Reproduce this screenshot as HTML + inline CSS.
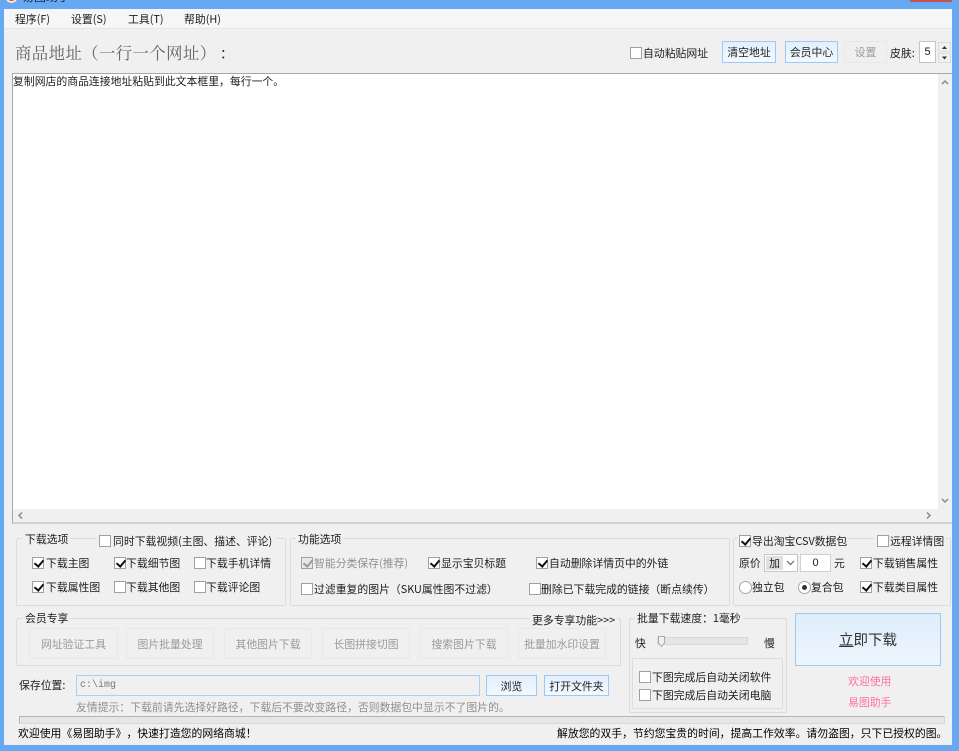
<!DOCTYPE html>
<html><head><meta charset="utf-8">
<style>
html,body{margin:0;padding:0;width:959px;height:751px;overflow:hidden;background:#66a9f2}
*{box-sizing:border-box;text-spacing-trim:space-all}
body{font:10.85px/14px "WenQuanYi Zen Hei","Noto Sans CJK SC",sans-serif;color:#1c1c1c;position:relative}
.a,.t,.c,.b,.g,.r{position:absolute}
.t{white-space:nowrap;height:14px;line-height:14px}
.c{width:12px;height:12px;border:1px solid #a0a0a0;background:#fff}
.c.k:after{content:"";position:absolute;left:3px;top:0;width:4px;height:7px;border:solid #111;border-width:0 2px 2px 0;transform:rotate(40deg)}
.c.d{background:#e8e8e8}.c.d:after{border-color:#999}
.r{width:13px;height:13px;border:1px solid #a8a8a8;border-radius:50%;background:#fff}
.r.k:after{content:"";position:absolute;left:3px;top:3px;width:5px;height:5px;border-radius:50%;background:#333}
.b{display:flex;align-items:center;justify-content:center;white-space:nowrap;background:linear-gradient(#e2f0fd,#f2f8fe);border:1px solid #9cc9f3;color:#222}
.b.o{background:#f0f0f0;border:1px solid #e8e8e8;color:#9a9a9a}
.g{border:1px solid #dcdcdc;border-radius:2px}
.l{background:#f0f0f0;padding:0 2px}
.gr{color:#8f8f8f}
</style></head><body>
<div class="a" style="left:910px;top:0;width:42px;height:2px;background:#c75050"></div>
<div class="a" style="left:6px;top:-6px;width:11px;height:9px;border-radius:50%;background:#d84a3a;border:2px solid #f4e8d8"></div>
<div class="t" style="left:22px;top:-10px;color:#1a2a3a;font-size:12px">易图助手</div>

<div class="a" style="left:4px;top:9px;width:948px;height:736px;background:#f0f0f0"></div>
<div class="a" style="left:4px;top:9px;width:948px;height:20px;background:#f5f6f8;border-bottom:1px solid #e6e6e6"></div>
<div class="t" style="left:15px;top:12px">程序(F)</div>
<div class="t" style="left:71px;top:12px">设置(S)</div>
<div class="t" style="left:128px;top:12px">工具(T)</div>
<div class="t" style="left:184px;top:12px">帮助(H)</div>

<div class="t" style="left:15px;top:43px;height:18px;font:16.4px/18px 'Noto Serif CJK SC',serif;letter-spacing:.4px;color:#666">商品地址（一行一个网址）<span style="color:#222;margin-left:3px">：</span></div>

<div class="c" style="left:630px;top:47px"></div><div class="t" style="left:643px;top:46px">自动粘贴网址</div>
<div class="b" style="left:722px;top:41px;width:54px;height:22px">清空地址</div>
<div class="b" style="left:785px;top:41px;width:53px;height:22px">会员中心</div>
<div class="b o" style="left:844px;top:41px;width:43px;height:22px">设置</div>
<div class="t" style="left:890px;top:46px">皮肤:</div>
<div class="a" style="left:919px;top:41px;width:17px;height:22px;background:#fff;border:1px solid #c4c4c4;text-align:center;line-height:20px;font-family:'Liberation Sans',sans-serif;font-size:11px">5</div>
<div class="a" style="left:938px;top:42px;width:13px;height:10px;background:#f0f0f0;border:1px solid #dcdcdc"><svg width="11" height="8" style="display:block"><path d="M3 6L5.500 3L8 6Z" fill="#333"/></svg></div>
<div class="a" style="left:938px;top:53px;width:13px;height:10px;background:#f0f0f0;border:1px solid #dcdcdc"><svg width="11" height="8" style="display:block"><path d="M3 2.500L5.500 5.500L8 2.500Z" fill="#333"/></svg></div>

<div class="a" style="left:12px;top:73px;width:940px;height:451px;background:#fff;border:1px solid #a8a8a8;border-right:0;border-bottom:2px solid #d0d0d0"></div>
<div class="t" style="left:13px;top:74px">复制网店的商品连接地址粘贴到此文本框里，每行一个。</div>
<div class="a" style="left:938px;top:74px;width:14px;height:435px;background:#f0f0f0"></div>
<div class="a" style="left:13px;top:509px;width:939px;height:13px;background:#f0f0f0"></div>
<svg class="a" style="left:938px;top:74px" width="14" height="435" fill="none" stroke="#8a8a8a" stroke-width="1.500"><path d="M4 10L7 7L10 10"/><path d="M4 425L7 428L10 425"/></svg>
<svg class="a" style="left:13px;top:509px" width="939" height="13" fill="none" stroke="#8a8a8a" stroke-width="1.500"><path d="M9 3.500L6 6.500L9 9.500"/><path d="M914 3.500L917 6.500L914 9.500"/></svg>

<!-- download options -->
<div class="g" style="left:16px;top:538px;width:270px;height:68px"></div>
<div class="t l" style="left:23px;top:532px">下载选项</div>
<div class="a" style="left:96px;top:532px;width:180px;height:14px;background:#f0f0f0"></div>
<div class="c" style="left:99px;top:535px"></div><div class="t" style="left:113px;top:534px">同时下载视频(主图、描述、评论)</div>
<div class="c k" style="left:32px;top:557px"></div><div class="t" style="left:46px;top:556px">下载主图</div>
<div class="c k" style="left:114px;top:557px"></div><div class="t" style="left:126px;top:556px">下载细节图</div>
<div class="c" style="left:194px;top:557px"></div><div class="t" style="left:206px;top:556px">下载手机详情</div>
<div class="c k" style="left:32px;top:581px"></div><div class="t" style="left:46px;top:580px">下载属性图</div>
<div class="c" style="left:114px;top:581px"></div><div class="t" style="left:126px;top:580px">下载其他图</div>
<div class="c" style="left:194px;top:581px"></div><div class="t" style="left:206px;top:580px">下载评论图</div>

<!-- functions -->
<div class="g" style="left:290px;top:538px;width:440px;height:68px"></div>
<div class="t l" style="left:296px;top:532px">功能选项</div>
<div class="c k d" style="left:301px;top:557px"></div><div class="t gr" style="left:314px;top:556px">智能分类保存(推荐)</div>
<div class="c k" style="left:428px;top:557px"></div><div class="t" style="left:441px;top:556px">显示宝贝标题</div>
<div class="c k" style="left:536px;top:557px"></div><div class="t" style="left:549px;top:556px">自动删除详情页中的外链</div>
<div class="c" style="left:301px;top:583px"></div><div class="t" style="left:314px;top:582px">过滤重复的图片（SKU属性图不过滤）</div>
<div class="c" style="left:529px;top:583px"></div><div class="t" style="left:541px;top:582px">删除已下载完成的链接（断点续传）</div>

<!-- csv -->
<div class="g" style="left:733px;top:538px;width:218px;height:68px"></div>
<div class="a" style="left:737px;top:532px;width:110px;height:14px;background:#f0f0f0"></div>
<div class="a" style="left:874px;top:532px;width:72px;height:14px;background:#f0f0f0"></div>
<div class="c k" style="left:739px;top:535px"></div><div class="t" style="left:752px;top:534px">导出淘宝CSV数据包</div>
<div class="c" style="left:877px;top:535px"></div><div class="t" style="left:890px;top:534px">远程详情图</div>
<div class="t" style="left:739px;top:556px">原价</div>
<div class="a" style="left:764px;top:554px;width:34px;height:18px;background:#fff;border:1px solid #c4c4c4"><div class="a" style="left:1px;top:1px;width:17px;height:14px;background:#e0e0e0;text-align:center">加</div><svg class="a" style="left:21px;top:4px" width="10" height="8" fill="none" stroke="#666" stroke-width="1.200"><path d="M1 2L4.500 5.500L8 2"/></svg></div>
<div class="a" style="left:800px;top:554px;width:31px;height:18px;background:#fff;border:1px solid #d0d0d0;text-align:center;line-height:16px;font-family:'Liberation Sans',sans-serif;font-size:11px">0</div>
<div class="t" style="left:834px;top:556px">元</div>
<div class="c k" style="left:860px;top:557px"></div><div class="t" style="left:873px;top:556px">下载销售属性</div>
<div class="r" style="left:739px;top:581px"></div><div class="t" style="left:752px;top:580px">独立包</div>
<div class="r k" style="left:798px;top:581px"></div><div class="t" style="left:811px;top:580px">复合包</div>
<div class="c k" style="left:860px;top:581px"></div><div class="t" style="left:873px;top:580px">下载类目属性</div>

<!-- member -->
<div class="g" style="left:16px;top:618px;width:605px;height:48px"></div>
<div class="t l" style="left:23px;top:611px">会员专享</div>
<div class="t l" style="left:530px;top:613px">更多专享功能&gt;&gt;&gt;</div>
<div class="b o" style="left:29px;top:628px;width:89px;height:31px">网址验证工具</div>
<div class="b o" style="left:126px;top:628px;width:88px;height:31px">图片批量处理</div>
<div class="b o" style="left:224px;top:628px;width:88px;height:31px">其他图片下载</div>
<div class="b o" style="left:322px;top:628px;width:88px;height:31px">长图拼接切图</div>
<div class="b o" style="left:420px;top:628px;width:88px;height:31px">搜索图片下载</div>
<div class="b o" style="left:518px;top:628px;width:88px;height:31px">批量加水印设置</div>

<div class="t" style="left:19px;top:678px">保存位置:</div>
<div class="a" style="left:76px;top:675px;width:404px;height:21px;background:#f0f0f0;border:1px solid #a9d0f5;padding-left:3px;font:10px/19px 'Liberation Mono',monospace;color:#777">c:\img</div>
<div class="b" style="left:486px;top:675px;width:51px;height:21px">浏览</div>
<div class="b" style="left:544px;top:675px;width:65px;height:21px">打开文件夹</div>
<div class="t gr" style="left:76px;top:700px">友情提示：下载前请先选择好路径，下载后不要改变路径，否则数据包中显示不了图片的。</div>

<!-- speed -->
<div class="g" style="left:629px;top:618px;width:158px;height:95px"></div>
<div class="t l" style="left:635px;top:611px">批量下载速度：1毫秒</div>
<div class="t" style="left:635px;top:636px">快</div>
<div class="a" style="left:657px;top:637px;width:91px;height:8px;background:#e2e6e8;border:1px solid #d8d8d8"></div>
<svg class="a" style="left:657px;top:636px" width="9" height="12"><path d="M1.500 .5H7.500V7L4.500 10.500L1.500 7Z" fill="#f0f0f0" stroke="#aaa"/></svg>
<div class="t" style="left:764px;top:636px">慢</div>
<div class="g" style="left:632px;top:658px;width:151px;height:51px"></div>
<div class="c" style="left:639px;top:671px"></div><div class="t" style="left:652px;top:670px">下图完成后自动关闭软件</div>
<div class="c" style="left:639px;top:689px"></div><div class="t" style="left:652px;top:688px">下图完成后自动关闭电脑</div>

<div class="b" style="left:795px;top:613px;width:146px;height:53px;font-size:14.500px;color:#333;background:linear-gradient(#deedfc,#edf5fd)"><span style="text-decoration:underline">立</span>即下载</div>
<div class="t" style="left:848px;top:674px;color:#ff6f9f">欢迎使用</div>
<div class="t" style="left:848px;top:695px;color:#ff6f9f">易图助手</div>

<div class="a" style="left:19px;top:716px;width:926px;height:8px;background:#e6e6e6;border:1px solid #b4b4b4;border-bottom-color:#d8d8d8;border-right-color:#d8d8d8"></div>
<div class="t" style="left:18px;top:726px;color:#000">欢迎使用《易图助手》，快速打造您的网络商城！</div>
<div class="t" style="left:557px;top:726px;color:#000">解放您的双手，节约您宝贵的时间，提高工作效率。请勿盗图，只下已授权的图。</div>
</body></html>
